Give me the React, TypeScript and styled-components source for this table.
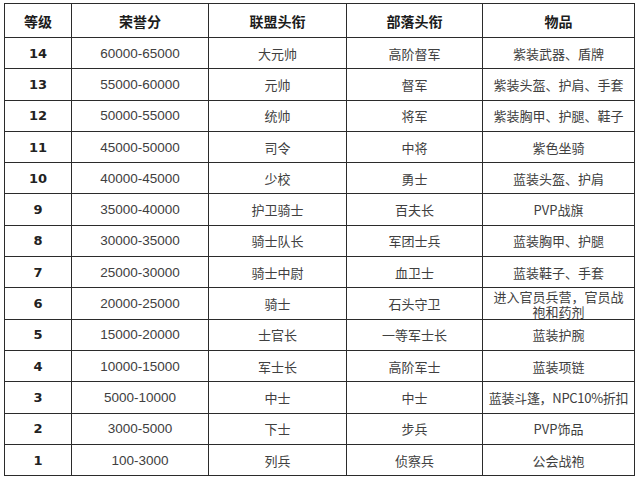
import React from "react";
import styled, { createGlobalStyle } from "styled-components";

const Global = createGlobalStyle`
  html, body { margin: 0; padding: 0; background: #ffffff; }
  body { font-family: "Noto Sans CJK SC", "Liberation Sans", sans-serif; }
`;

const Page = styled.div`
  padding: 3px 0 0 4px;
  width: 640px;
  height: 480px;
  box-sizing: border-box;
  background: #fff;
`;

const Table = styled.table`
  border-collapse: collapse;
  table-layout: fixed;
  width: 630px;
  color: #3a3a3a;
`;

const Th = styled.th`
  height: 33px;
  padding: 0;
  border: 1px solid #2b2b2b;
  font-family: "Noto Sans CJK SC", sans-serif;
  font-weight: 700;
  font-size: 14px;
  color: #1c1c1c;
  text-align: center;
  vertical-align: middle;
`;

const Td = styled.td<{ $kind?: "level" | "score" | "text"; $nowrap?: boolean }>`
  height: 30.3px;
  padding: ${(p) => (p.$nowrap ? "0" : "0 6px")};
  white-space: ${(p) => (p.$nowrap ? "nowrap" : "normal")};
  border: 1px solid #2b2b2b;
  text-align: center;
  vertical-align: middle;
  line-height: 15px;
  font-size: ${(p) => (p.$kind === "score" ? "13.5px" : "13px")};
  font-weight: ${(p) => (p.$kind === "level" ? 700 : 400)};
  font-family: ${(p) =>
    p.$kind === "level"
      ? '"DejaVu Sans", sans-serif'
      : p.$kind === "score"
      ? '"Liberation Sans", sans-serif'
      : '"Noto Sans CJK SC", sans-serif'};
  color: ${(p) => (p.$kind === "level" ? "#222" : "#404040")};
  letter-spacing: ${(p) => (p.$nowrap ? "-0.3px" : "0")};
  overflow: hidden;
`;

const rows: [string, string, string, string, string][] = [
  ["14", "60000-65000", "大元帅", "高阶督军", "紫装武器、盾牌"],
  ["13", "55000-60000", "元帅", "督军", "紫装头盔、护肩、手套"],
  ["12", "50000-55000", "统帅", "将军", "紫装胸甲、护腿、鞋子"],
  ["11", "45000-50000", "司令", "中将", "紫色坐骑"],
  ["10", "40000-45000", "少校", "勇士", "蓝装头盔、护肩"],
  ["9", "35000-40000", "护卫骑士", "百夫长", "PVP战旗"],
  ["8", "30000-35000", "骑士队长", "军团士兵", "蓝装胸甲、护腿"],
  ["7", "25000-30000", "骑士中尉", "血卫士", "蓝装鞋子、手套"],
  ["6", "20000-25000", "骑士", "石头守卫", "进入官员兵营，官员战袍和药剂"],
  ["5", "15000-20000", "士官长", "一等军士长", "蓝装护腕"],
  ["4", "10000-15000", "军士长", "高阶军士", "蓝装项链"],
  ["3", "5000-10000", "中士", "中士", "蓝装斗篷，NPC10%折扣"],
  ["2", "3000-5000", "下士", "步兵", "PVP饰品"],
  ["1", "100-3000", "列兵", "侦察兵", "公会战袍"],
];

export default function App() {
  return (
    <Page>
      <Global />
      <Table>
        <colgroup>
          <col style={{ width: 67 }} />
          <col style={{ width: 137 }} />
          <col style={{ width: 138 }} />
          <col style={{ width: 136 }} />
          <col style={{ width: 152 }} />
        </colgroup>
        <thead>
          <tr>
            <Th>等级</Th>
            <Th>荣誉分</Th>
            <Th>联盟头衔</Th>
            <Th>部落头衔</Th>
            <Th>物品</Th>
          </tr>
        </thead>
        <tbody>
          {rows.map((r) => (
            <tr key={r[0]}>
              <Td $kind="level">{r[0]}</Td>
              <Td $kind="score">{r[1]}</Td>
              <Td $kind="text">{r[2]}</Td>
              <Td $kind="text">{r[3]}</Td>
              <Td $kind="text" $nowrap={r[4].includes("NPC")}>
                {r[4]}
              </Td>
            </tr>
          ))}
        </tbody>
      </Table>
    </Page>
  );
}
